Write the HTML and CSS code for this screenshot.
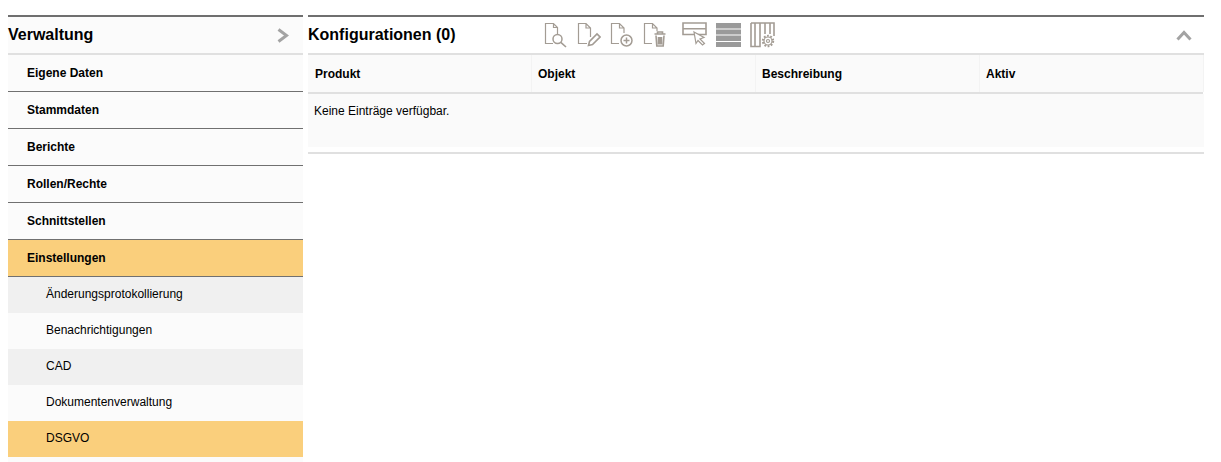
FILE: index.html
```html
<!DOCTYPE html>
<html lang="de">
<head>
<meta charset="utf-8">
<title>Verwaltung</title>
<link rel="stylesheet" href="styles.css">
</head>
<body>
<div class="page">
  <aside class="sidebar">
    <header class="side-head">
      <h2 class="title">Verwaltung</h2>
      <svg class="chev-right" width="12" height="15" viewBox="0 0 12 15"><path d="M1.500 1.500 9.500 7.500 1.500 13.500" /></svg>
    </header>
    <nav>
      <a class="item">Eigene Daten</a>
      <a class="item">Stammdaten</a>
      <a class="item">Berichte</a>
      <a class="item">Rollen/Rechte</a>
      <a class="item">Schnittstellen</a>
      <a class="item active">Einstellungen</a>
      <a class="sub alt">Änderungsprotokollierung</a>
      <a class="sub">Benachrichtigungen</a>
      <a class="sub alt">CAD</a>
      <a class="sub">Dokumentenverwaltung</a>
      <a class="sub current">DSGVO</a>
    </nav>
  </aside>
  <main class="panel">
    <header class="panel-head">
      <h2 class="title panel-title">Konfigurationen (0)</h2>
      <div class="toolbar">
        <svg class="ic" width="24" height="26" viewBox="0 0 24 26"><path d="M9 21.500H1.500V1.500H9.500L13.500 5.500V12M9.500 1.500V5.500H13.500"/><circle class="thick" cx="13.500" cy="17" r="4.500"/><path class="heavy" d="M16.800 20.300 22 25"/></svg>
        <svg class="ic" width="24" height="26" viewBox="0 0 24 26"><path d="M10 21.500H1.500V1.500H9L13.500 6V15M9 1.500V6H13.500"/><path class="heavy" d="M11.500 23.500 12.500 19.500 20 12 23 15 15.500 22.500Z"/></svg>
        <svg class="ic ic-wide" width="26" height="26" viewBox="0 0 26 26"><path d="M10 21.500H2.500V1.500H10.500L15 6V11M10.500 1.500V6H15"/><circle class="thick" cx="17.500" cy="18.500" r="5.500"/><path class="thick" d="M14.500 18.500H20.500M17.500 15.500V21.500"/></svg>
        <svg class="ic ic-wide" width="26" height="26" viewBox="0 0 26 26"><path d="M10 21.500H2.500V1.500H10.500L15 6V9M10.500 1.500V6H15"/><path class="heavy" d="M12.500 12H23.500M15.500 11.500V10H20.500V11.500"/><path class="heavy" d="M14 13.500 14.800 24H21.200L22 13.500M16.500 15V22.500M18 15V22.500M19.500 15V22.500"/></svg>
        <svg class="ic ic-rows" width="25" height="26" viewBox="0 0 25 26"><path class="heavy" d="M1 1H24V12.500H1ZM1 6.800H24"/><path class="cursor" d="M12 10 22 15.500 18 17 22.500 21.500 20.500 23 16 18.500 14 21.500Z"/></svg>
        <svg class="ic ic-solid" width="25" height="26" viewBox="0 0 25 26"><path class="fill" d="M0 1H25V6.500H0ZM0 7.500H25V12.500H0ZM0 13.500H25V19H0ZM0 20H25V25H0Z"/></svg>
        <svg class="ic" width="25" height="26" viewBox="0 0 25 26"><path class="heavy" d="M1 1H24V14M1 1V24.500H10V1M5 1V24.500M15 1V12M20 1V12"/><circle class="gear-teeth" cx="18" cy="19" r="5.200" stroke-dasharray="1.800 1.470"/><circle cx="18" cy="19" r="4"/><circle cx="18" cy="19" r="1.500"/></svg>
      </div>
      <svg class="chev-up" width="16" height="11" viewBox="0 0 16 11"><path d="M1.500 9.500 8 2.500 14.500 9.500"/></svg>
    </header>
    <div class="table-head">
      <div class="th first">Produkt</div>
      <div class="th">Objekt</div>
      <div class="th">Beschreibung</div>
      <div class="th">Aktiv</div>
    </div>
    <div class="table-body">Keine Einträge verfügbar.</div>
    <div class="table-foot"></div>
  </main>
</div>
</body>
</html>
```
FILE: styles.css
```css
* {
  box-sizing: border-box;
}

html,
body {
  margin: 0;
  height: 100%;
  overflow: hidden;
  background: #fff;
}

body {
  font-family: "Liberation Sans", Arial, sans-serif;
  color: #000;
}

.page {
  display: flex;
  gap: 5px;
  height: 100%;
  padding: 15px 17px 0 8px;
}

.sidebar {
  width: 295px;
  flex: none;
  background: #fbfbfb;
  border-top: 2px solid #6f6f6f;
}

.side-head {
  display: flex;
  align-items: center;
  justify-content: space-between;
  height: 38px;
  padding-right: 14px;
  border-bottom: 2px solid #e0e0e0;
}

.title {
  margin: 0;
  font-size: 16px;
  font-weight: 700;
  line-height: 18px;
}

.chev-right path,
.chev-up path {
  fill: none;
  stroke: #a3a3a3;
  stroke-width: 3;
}

.item {
  display: flex;
  align-items: center;
  height: 37px;
  padding-left: 19px;
  font-size: 12px;
  font-weight: 700;
  border-bottom: 1px solid #707070;
}

.item.active {
  background: #facf7c;
}

.sub {
  display: flex;
  align-items: center;
  height: 36px;
  padding-left: 38px;
  padding-bottom: 2px;
  font-size: 12px;
}

.sub.alt {
  background: #f0f0f0;
}

.sub.current {
  background: #facf7c;
}

.panel {
  flex: 1;
  min-width: 0;
  border-top: 2px solid #6f6f6f;
}

.panel-head {
  display: flex;
  align-items: center;
  height: 38px;
  border-bottom: 2px solid #e0e0e0;
  padding-right: 12px;
}

.panel-title {
  width: 236px;
  flex: none;
}

.toolbar {
  display: flex;
  gap: 9px;
}

.ic {
  display: block;
  fill: none;
  stroke: #a39c94;
  stroke-width: 1.200;
}

.ic-wide {
  margin-left: -1px;
  margin-right: -1px;
}

.ic-rows {
  margin-left: 6px;
}

.ic .thick {
  stroke-width: 1.500;
}

.ic .heavy {
  stroke-width: 1.600;
}

.ic .gear-teeth {
  stroke-width: 2;
  fill: #fff;
}

.ic .cursor {
  fill: #fff;
  stroke-width: 1.200;
}

.ic .fill {
  fill: #9a9a9a;
  stroke: none;
}

.chev-up {
  margin-left: auto;
}

.table-head {
  display: grid;
  grid-template-columns: repeat(4, 224px);
  height: 39px;
  background: #fafafa;
  border-bottom: 2px solid #e0e0e0;
  margin-right: 1px;
}

.th {
  display: flex;
  align-items: center;
  padding-left: 6px;
  font-size: 12px;
  font-weight: 700;
  border-right: 1px solid #f3f3f3;
}

.th.first {
  padding-left: 7px;
}

.table-body {
  height: 53px;
  padding: 10px 0 0 6px;
  font-size: 12px;
  line-height: 14px;
  background: #fafafa;
}

.table-foot {
  height: 2px;
  margin-top: 5px;
  background: #e0e0e0;
}
```
